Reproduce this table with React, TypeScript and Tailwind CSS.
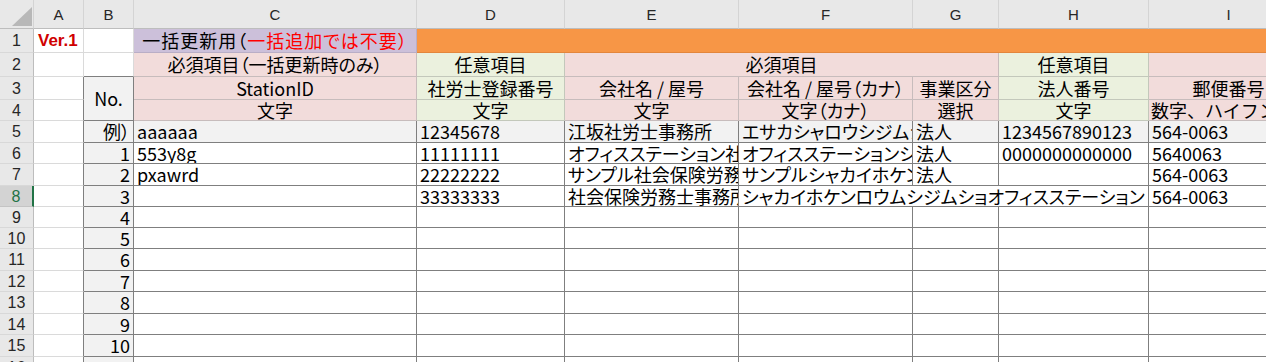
import React from "react";

const HDR =
  "flex items-center justify-center bg-[#e8e8e8] border-r border-b border-r-[#d4d4d4] border-b-[#bdbdbd] text-[15px] text-[#262626] font-['Liberation_Sans',sans-serif]";
const RH =
  "flex items-center justify-center bg-[#e8e8e8] border-r border-b border-r-[#bdbdbd] border-b-[#d8d8d8] text-[16px] text-[#262626] font-['Liberation_Sans',sans-serif]";
const RH_SEL =
  "flex items-center justify-center bg-[#d3d3d3] border-r-2 border-b border-r-[#217346] border-b-[#c4c4c4] text-[16px] text-[#217346] font-['Liberation_Sans',sans-serif]";
const GRID = "bg-white border-r border-b border-[#dadada]";
const GRID_DR = "bg-white border-r border-b border-r-[#7f7f7f] border-b-[#dadada]";
const PINK =
  "flex items-center justify-center bg-[#f2dcdb] border-r border-b border-[#c7bcbc] whitespace-nowrap overflow-hidden";
const GREEN =
  "flex items-center justify-center bg-[#ebf1de] border-r border-b border-[#c3c8bb] whitespace-nowrap overflow-hidden";
const NUM =
  "flex items-center justify-end bg-[#f2f2f2] border-r border-b border-[#7f7f7f] px-[3px] whitespace-nowrap overflow-hidden";
const DW =
  "flex items-center bg-white border-r border-b border-[#7f7f7f] px-[3px] whitespace-nowrap overflow-hidden";
const DG =
  "flex items-center bg-[#f2f2f2] border-r border-b border-[#7f7f7f] px-[3px] whitespace-nowrap overflow-hidden";

type Row = {
  r: number;
  n: string;
  c?: string;
  d?: string;
  e?: string;
  f?: string;
  g?: string;
  h?: string;
  i?: string;
  gray?: boolean;
  spanF?: boolean;
};

const rows: Row[] = [
  {
    r: 5,
    n: "例）",
    c: "aaaaaa",
    d: "12345678",
    e: "江坂社労士事務所",
    f: "エサカシャロウシジムショ",
    g: "法人",
    h: "1234567890123",
    i: "564-0063",
    gray: true,
  },
  {
    r: 6,
    n: "1",
    c: "553y8g",
    d: "11111111",
    e: "オフィスステーション社労士事務所",
    f: "オフィスステーションシャロウシジムショ",
    g: "法人",
    h: "0000000000000",
    i: "5640063",
  },
  {
    r: 7,
    n: "2",
    c: "pxawrd",
    d: "22222222",
    e: "サンプル社会保険労務士事務所",
    f: "サンプルシャカイホケンロウムシジムショ",
    g: "法人",
    h: "",
    i: "564-0063",
  },
  {
    r: 8,
    n: "3",
    c: "",
    d: "33333333",
    e: "社会保険労務士事務所",
    f: "シャカイホケンロウムシジムショオフィスステーション",
    h: "",
    i: "564-0063",
    spanF: true,
  },
  { r: 9, n: "4" },
  { r: 10, n: "5" },
  { r: 11, n: "6" },
  { r: 12, n: "7" },
  { r: 13, n: "8" },
  { r: 14, n: "9" },
  { r: 15, n: "10" },
  { r: 16, n: "11" },
];

function DataRow({ row }: { row: Row }) {
  const cell = row.gray ? DG : DW;
  return (
    <>
      <div className={row.r === 8 ? RH_SEL : RH}>{row.r}</div>
      <div className={GRID_DR}></div>
      <div className={NUM}>{row.n}</div>
      <div className={cell}>{row.c}</div>
      <div className={cell}>{row.d}</div>
      <div className={cell}>{row.e}</div>
      {row.spanF ? (
        <div className={cell + " col-span-3"}>{row.f}</div>
      ) : (
        <>
          <div className={cell}>{row.f}</div>
          <div className={cell}>{row.g}</div>
          <div className={cell}>{row.h}</div>
        </>
      )}
      <div className={cell}>{row.i}</div>
    </>
  );
}

export default function App() {
  return (
    <div className="w-[1266px] h-[362px] overflow-hidden bg-white text-black font-['Noto_Sans_CJK_JP',sans-serif] text-[18px] leading-[21px] [font-feature-settings:'palt']">
      <div className="grid w-max grid-cols-[34px_50px_50px_283px_148px_174px_174px_86px_150px_160px] grid-rows-[29px_24px_24px_23px_21px_22px_21px_22px_21px_21px_21px_22px_21px_22px_21px_22px_22px]">
        {/* column headers */}
        <div className="relative bg-[#e8e8e8] border-r border-b border-r-[#d4d4d4] border-b-[#bdbdbd]">
          <svg
            className="absolute right-[1px] bottom-[2px]"
            width="20"
            height="19"
            viewBox="0 0 20 19"
          >
            <polygon points="20,0 20,19 0,19" fill="#b8b8b8" />
          </svg>
        </div>
        <div className={HDR}>A</div>
        <div className={HDR}>B</div>
        <div className={HDR}>C</div>
        <div className={HDR}>D</div>
        <div className={HDR}>E</div>
        <div className={HDR}>F</div>
        <div className={HDR}>G</div>
        <div className={HDR}>H</div>
        <div className={HDR}>I</div>

        {/* row 1 */}
        <div className={RH}>1</div>
        <div className={GRID + " flex items-center pl-[4px]"}>
          <span className="font-['Liberation_Sans',sans-serif] font-bold text-[17px] text-[#d00000]">
            Ver.1
          </span>
        </div>
        <div className={GRID}></div>
        <div className="flex items-center justify-center bg-[#ccc0da] border-r border-b border-[#b9aec6] whitespace-nowrap overflow-hidden tracking-[1px]">
          <span>一括更新用（</span>
          <span className="text-[#ff0000]">一括追加では不要）</span>
        </div>
        <div className="col-span-6 bg-[#f79646] border-b border-[#e3863c]"></div>

        {/* row 2 */}
        <div className={RH}>2</div>
        <div className={GRID}></div>
        <div className="bg-white border-r border-b border-r-[#dadada] border-b-[#7f7f7f]"></div>
        <div className={PINK}>必須項目（一括更新時のみ）</div>
        <div className={GREEN}>任意項目</div>
        <div className={PINK + " col-span-3"}>必須項目</div>
        <div className={GREEN}>任意項目</div>
        <div className={PINK}></div>

        {/* row 3 */}
        <div className={RH}>3</div>
        <div className={GRID_DR}></div>
        <div className="row-span-2 flex items-center justify-center bg-[#f2f2f2] border-r border-b border-[#7f7f7f]">
          No.
        </div>
        <div className={PINK}>StationID</div>
        <div className={GREEN}>社労士登録番号</div>
        <div className={PINK}>会社名 / 屋号</div>
        <div className={PINK}>会社名 / 屋号（カナ）</div>
        <div className={PINK}>事業区分</div>
        <div className={GREEN}>法人番号</div>
        <div className={PINK}>郵便番号</div>

        {/* row 4 */}
        <div className={RH}>4</div>
        <div className={GRID_DR}></div>
        <div className={PINK}>文字</div>
        <div className={GREEN}>文字</div>
        <div className={PINK}>文字</div>
        <div className={PINK}>文字（カナ）</div>
        <div className={PINK}>選択</div>
        <div className={GREEN}>文字</div>
        <div className={PINK + " !justify-start pl-[2px] [font-feature-settings:normal]"}>
          数字、ハイフン
        </div>

        {rows.map((row) => (
          <DataRow key={row.r} row={row} />
        ))}
      </div>
    </div>
  );
}
